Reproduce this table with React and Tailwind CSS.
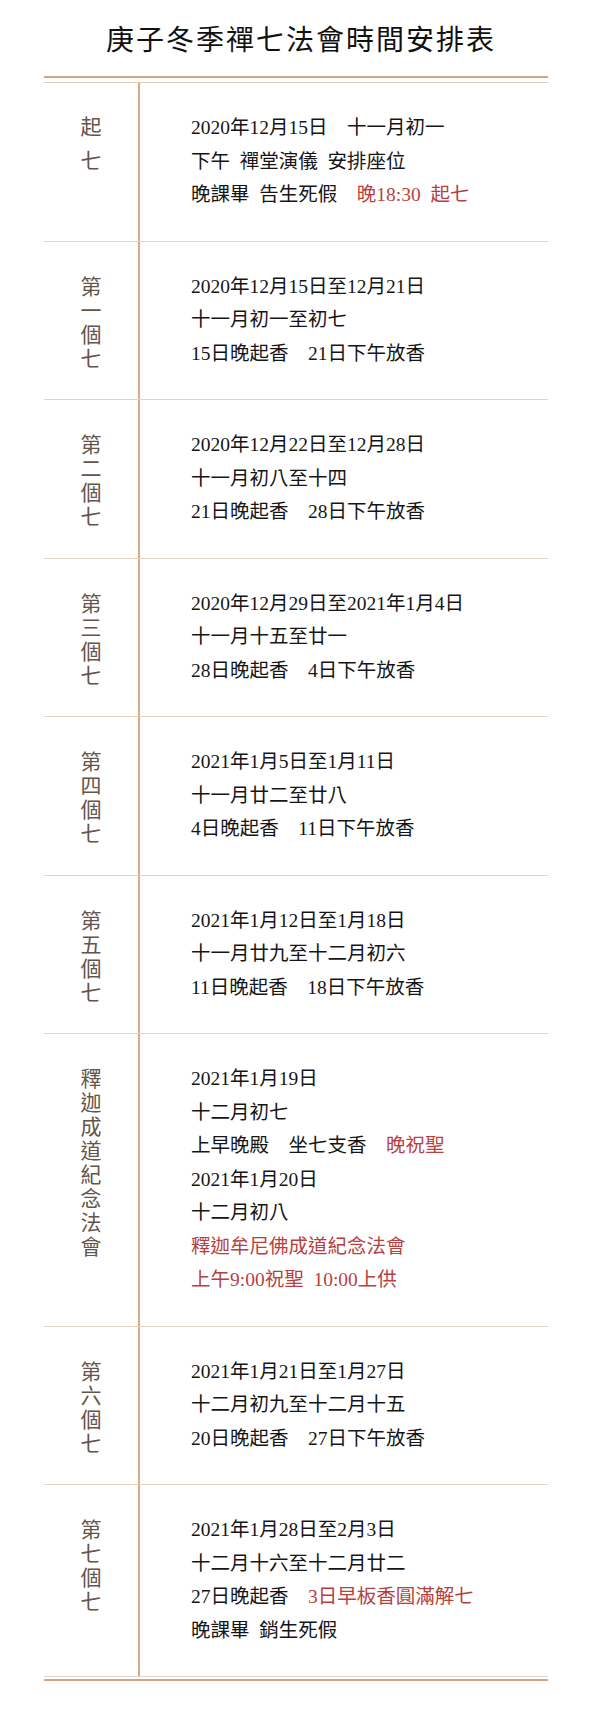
import React from "react";

// Schedule rows: each line is a list of segments, red ones marked
const ROWS = [
  {
    label: "起七",
    tall: true,
    lines: [
      ["2020年12月15日　十一月初一"],
      ["下午\u00a0\u00a0禪堂演儀\u00a0\u00a0安排座位"],
      ["晚課畢\u00a0\u00a0告生死假　", { red: "晚18:30\u00a0\u00a0起七" }],
    ],
  },
  {
    label: "第一個七",
    lines: [
      ["2020年12月15日至12月21日"],
      ["十一月初一至初七"],
      ["15日晚起香　21日下午放香"],
    ],
  },
  {
    label: "第二個七",
    lines: [
      ["2020年12月22日至12月28日"],
      ["十一月初八至十四"],
      ["21日晚起香　28日下午放香"],
    ],
  },
  {
    label: "第三個七",
    lines: [
      ["2020年12月29日至2021年1月4日"],
      ["十一月十五至廿一"],
      ["28日晚起香　4日下午放香"],
    ],
  },
  {
    label: "第四個七",
    lines: [
      ["2021年1月5日至1月11日"],
      ["十一月廿二至廿八"],
      ["4日晚起香　11日下午放香"],
    ],
  },
  {
    label: "第五個七",
    lines: [
      ["2021年1月12日至1月18日"],
      ["十一月廿九至十二月初六"],
      ["11日晚起香　18日下午放香"],
    ],
  },
  {
    label: "釋迦成道紀念法會",
    lines: [
      ["2021年1月19日"],
      ["十二月初七"],
      ["上早晚殿　坐七支香　", { red: "晚祝聖" }],
      ["2021年1月20日"],
      ["十二月初八"],
      [{ red: "釋迦牟尼佛成道紀念法會" }],
      [{ red: "上午9:00祝聖\u00a0\u00a010:00上供" }],
    ],
  },
  {
    label: "第六個七",
    lines: [
      ["2021年1月21日至1月27日"],
      ["十二月初九至十二月十五"],
      ["20日晚起香　27日下午放香"],
    ],
  },
  {
    label: "第七個七",
    lines: [
      ["2021年1月28日至2月3日"],
      ["十二月十六至十二月廿二"],
      ["27日晚起香　", { red: "3日早板香圓滿解七" }],
      ["晚課畢\u00a0\u00a0銷生死假"],
    ],
  },
];

const FONT = {
  fontFamily: '"Liberation Serif", "Noto Sans CJK TC", serif',
};

function Row({ row }) {
  return (
    <div className="flex border-b border-[#e6d3c3]">
      <div
        className={`w-[96px] shrink-0 border-r-2 border-[#daa985] flex flex-col items-center text-[21px] text-[#65544a] ${
          row.tall ? "pt-[28px] leading-[33.5px]" : "pt-[33px] leading-[24px]"
        }`}
      >
        {[...row.label].map((ch, i) => (
          <span key={i}>{ch}</span>
        ))}
      </div>
      <div className="flex-1 pl-[51px] pt-[28px] pb-[29px] text-[19.5px] leading-[33.5px] text-[#151515]">
        {row.lines.map((line, i) => (
          <div key={i} className="whitespace-nowrap">
            {line.map((seg, j) =>
              typeof seg === "string" ? (
                <span key={j}>{seg}</span>
              ) : (
                <span key={j} className="text-[#b73f3e]">
                  {seg.red}
                </span>
              )
            )}
          </div>
        ))}
      </div>
    </div>
  );
}

export default function App() {
  return (
    <div className="w-[600px] min-h-[1727px] bg-white pb-[49px]" style={FONT}>
      <h1 className="pt-[22px] h-[76px] text-center text-[28px] leading-[38px] tracking-[2px] pl-[2px] text-[#111] font-normal">
        庚子冬季禪七法會時間安排表
      </h1>

      <div className="ml-[44px] w-[504px]">
        {/* top double rule */}
        <div className="h-[2px] bg-[#d3a585]" />
        <div className="h-[4px]" />
        <div className="h-px bg-[#e4c9b2]" />

        {ROWS.map((row, i) => (
          <Row key={i} row={row} />
        ))}

        {/* bottom double rule */}
        <div className="h-[2px]" />
        <div className="h-[2px] bg-[#d3a585]" />
      </div>
    </div>
  );
}
